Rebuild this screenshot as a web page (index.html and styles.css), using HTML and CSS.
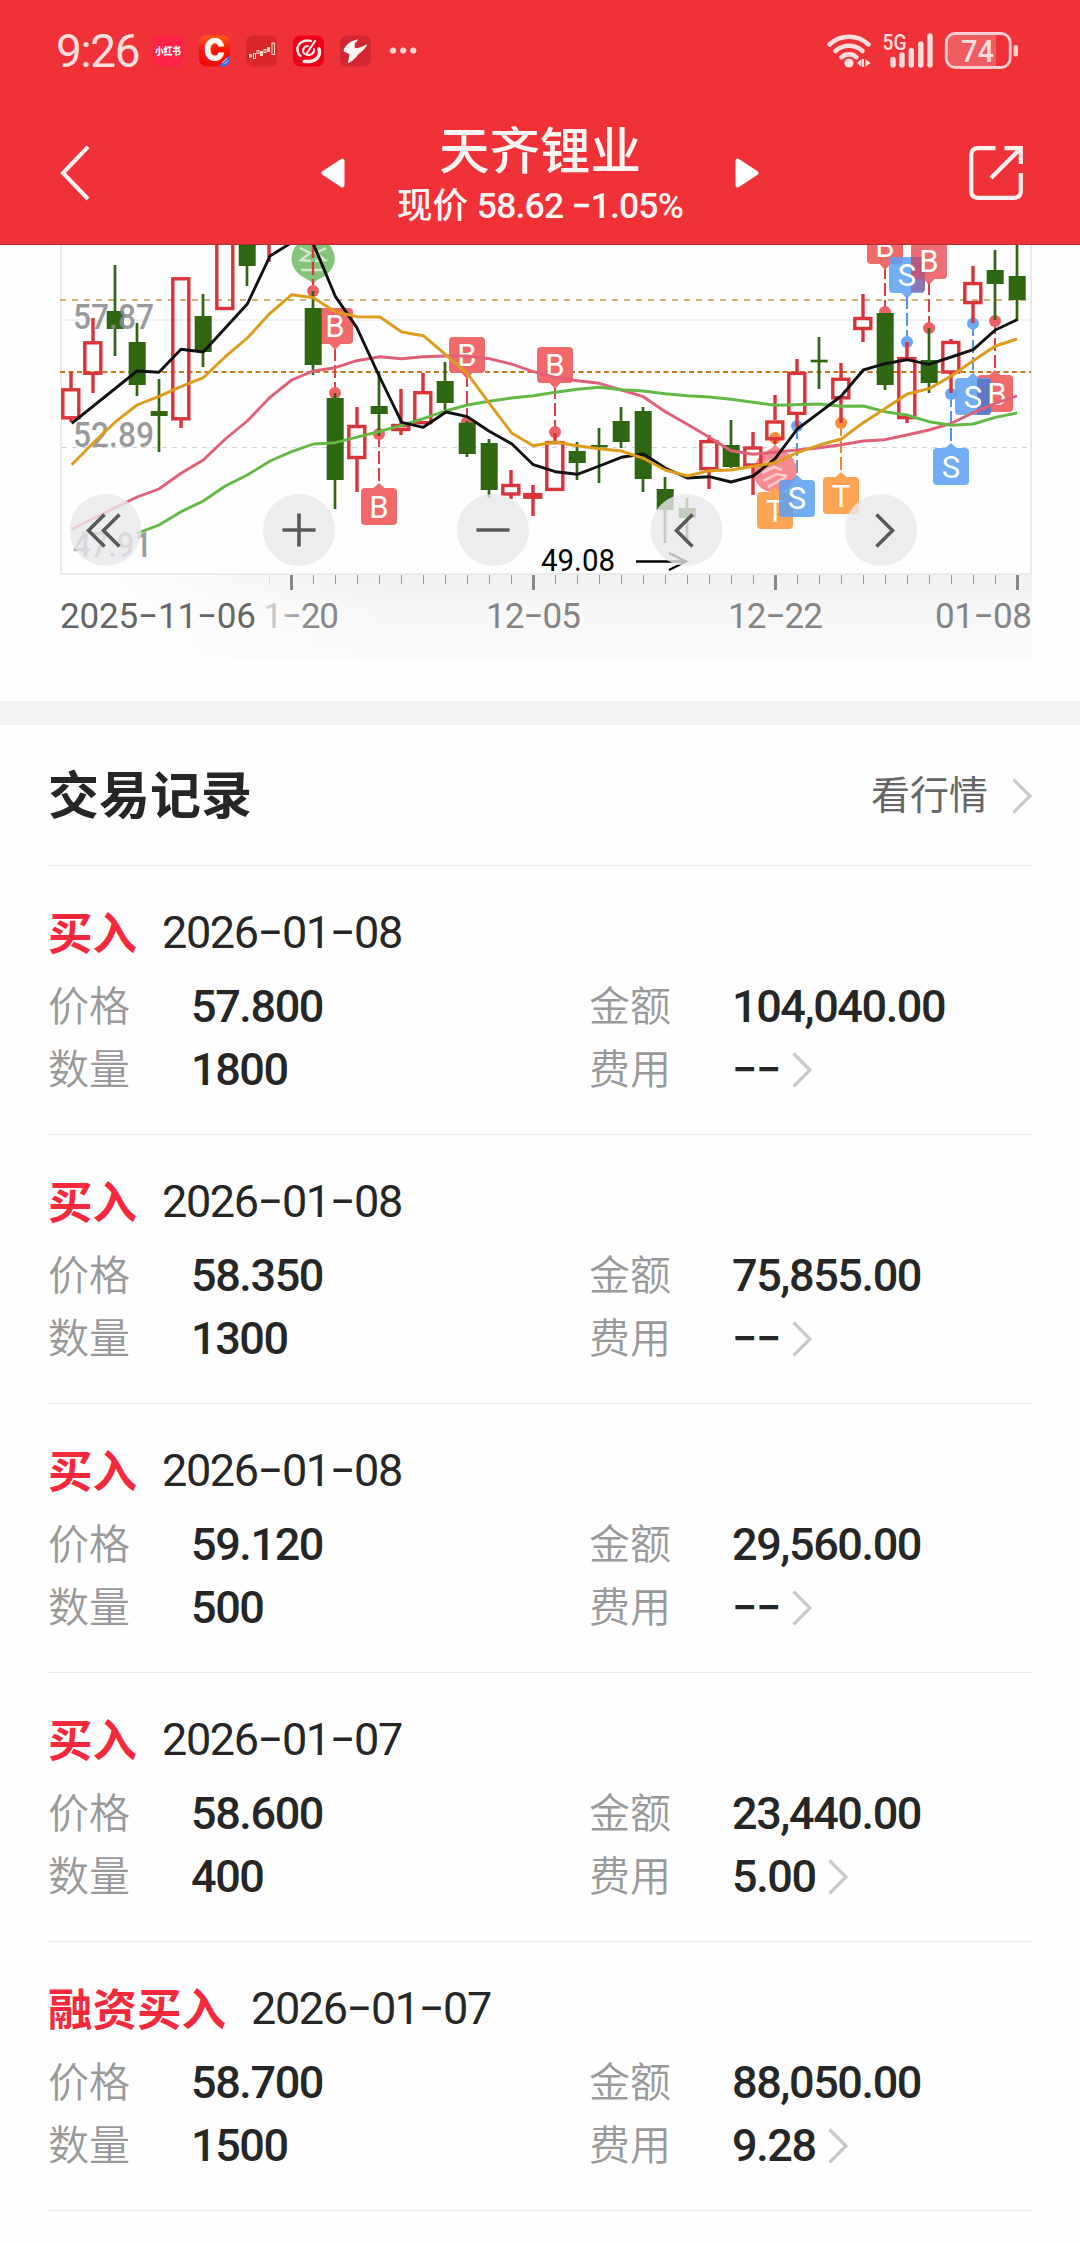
FILE: index.html
```html
<!DOCTYPE html>
<html lang="zh-CN">
<head>
<meta charset="utf-8">
<title>天齐锂业 交易记录</title>
<link rel="stylesheet" href="styles.css">
</head>
<body>
<svg class="defs" width="0" height="0" aria-hidden="true">
  <symbol id="chevron" viewBox="0 0 20 36"><path d="M1.5 1.5 18 18 1.5 34.500" fill="none" stroke="#c9c9c9" stroke-width="3.200"/></symbol>
</svg>
<header class="header">
  <div class="status">
    <span class="clock">9:26</span>
    <svg class="apps" viewBox="153 35 264 32" width="264" height="32">
      <defs><linearGradient id="cg" x1="0" y1="0" x2="0" y2="1"><stop offset="0" stop-color="#ff5a1c"/><stop offset=".5" stop-color="#f31206"/><stop offset="1" stop-color="#ee0a08"/></linearGradient></defs>
      <rect x="153" y="35.500" width="31" height="31" rx="7" fill="#fb2348"/>
      <text class="xhs" x="155" y="55" textLength="26" lengthAdjust="spacingAndGlyphs">小红书</text>
      <rect x="199" y="35.500" width="31" height="31" rx="7" fill="url(#cg)"/>
      <text class="cmark" x="204" y="61" textLength="21" lengthAdjust="spacingAndGlyphs">C</text>
      <path d="M230 55v4.500a7 7 0 0 1-7 7h-4.500z" fill="#3b6fdc"/>
      <path d="M222 63l5-5M224.500 64l3.500-3.500" stroke="#c8d8fa" stroke-width="1"/>
      <rect x="246" y="35.500" width="31" height="31" rx="7" fill="#d9262b"/>
      <g fill="#ffd9c8"><rect x="249" y="54" width="3" height="3.500"/><rect x="260" y="51" width="3" height="5"/><rect x="267" y="47" width="3" height="5"/></g>
      <g fill="none" stroke="#ffd9c8"><rect x="253.500" y="53.500" width="2" height="5"/><rect x="257" y="50.500" width="2" height="3"/><rect x="264" y="49.500" width="2" height="3"/><rect x="272" y="43" width="2.500" height="11.500"/></g>
      <rect x="293" y="35.500" width="31" height="31" rx="7" fill="#ee0019"/>
      <g fill="none" stroke="#ffe9e6" stroke-linecap="round">
        <path d="M311 41c-8-2-14 3-13.500 9 .3 3 1.500 5 3 6" stroke-width="2.500"/>
        <path d="M319 49c2 7-3 12-9 12.500h-6" stroke-width="3.500"/>
        <path d="M315 41 307 53" stroke-width="2.200"/>
        <path d="M308 46c-5 0-6.500 6-3 8 5 3 10-1 9-5" stroke-width="2"/>
      </g>
      <rect x="340" y="35.500" width="31" height="31" rx="7" fill="#d22733"/>
      <path d="M357.500 40c-6 1-12.500 5-13.500 11l6 3-1.500 8.500c2-.5 7-4.500 9.500-8.500 3-2 7-5.500 8.500-9-4 2-8 4-11.500 3.500-1.500-3-1-5.500 2.500-8.500z" fill="#fff5f3" stroke="#fff5f3" stroke-width="1"/>
      <g fill="#ffd6d4"><circle cx="393" cy="50.500" r="3.100"/><circle cx="403.200" cy="50.500" r="3.100"/><circle cx="413.300" cy="50.500" r="3.100"/></g>
    </svg>
    <svg class="system" viewBox="826 31 194 40" width="194" height="40">
      <g fill="none" stroke="#ffdedd" stroke-width="4.600" stroke-linecap="round">
        <path d="M829.500 44.500a28.500 28.500 0 0 1 39 0"/>
        <path d="M835.500 51a20 20 0 0 1 27 0"/>
        <path d="M841.500 57.200a11.500 11.500 0 0 1 15 0"/>
      </g>
      <circle cx="849" cy="63" r="4.600" fill="#ffdedd"/>
      <path d="M857 63l4.500-4v8zM870.500 63l-5-4v8zM862 59h2v8h-2z" fill="#ffdedd"/>
      <text class="net" x="882.500" y="50" textLength="24" lengthAdjust="spacingAndGlyphs">5G</text>
      <path d="M893 59.500v5.500M902 55v10M911.300 50.500v14.500M920.800 44v21M930 36v29" stroke="#ffdedd" stroke-width="5.400" stroke-linecap="round"/>
      <path d="M956 35h40v31h-40q-9 0-9-9v-13q0-9 9-9z" fill="#f05c60"/>
      <rect x="946.200" y="33.500" width="64" height="34" rx="9" fill="none" stroke="#ffcfcf" stroke-width="2.800"/>
      <rect x="1013.500" y="45" width="4.500" height="11.500" rx="2" fill="#ffcfcf"/>
      <text class="batt" x="961" y="62" textLength="33" lengthAdjust="spacingAndGlyphs">74</text>
    </svg>
  </div>
  <nav class="nav">
    <svg class="back" viewBox="0 0 30 56" width="30" height="56"><path d="M28 1.800 3 28 28 54" fill="none" stroke="#fff5f3" stroke-width="4"/></svg>
    <svg class="tri" viewBox="0 0 24 30" width="24" height="30"><path d="M21.500 2.500v25L2.500 15z" fill="#fff" stroke="#fff" stroke-width="4" stroke-linejoin="round"/></svg>
    <div class="titles">
      <h1>天齐锂业</h1>
      <p>现价 <span>58.62 −1.05%</span></p>
    </div>
    <svg class="tri" viewBox="0 0 24 30" width="24" height="30"><path d="M2.500 2.500v25L21.500 15z" fill="#fff" stroke="#fff" stroke-width="4" stroke-linejoin="round"/></svg>
    <svg class="share" viewBox="0 0 54 54" width="54" height="54"><g fill="none" stroke="#fff1ef" stroke-width="4.200"><path d="M26.500 2.200H9Q2.200 2.200 2.200 9v36q0 6.800 6.800 6.800h36q6.800 0 6.800-6.800V27"/><path d="M35.500 2.200H51.800V18"/><path d="M22 32 51 3"/></g></svg>
  </nav>
</header>

<section class="chart">
<svg viewBox="0 245 1080 456" width="1080" height="456">
  <defs>
    <linearGradient id="axisx" x1="0" x2="1" y1="0" y2="0"><stop offset="0" stop-color="#fff"/><stop offset=".35" stop-color="#fff" stop-opacity="0"/></linearGradient>
    <linearGradient id="axisy" x1="0" x2="0" y1="0" y2="1"><stop offset="0" stop-color="#f1f1f1"/><stop offset=".4" stop-color="#f7f7f7"/><stop offset="1" stop-color="#fafafa"/></linearGradient>
    <linearGradient id="fade" gradientUnits="userSpaceOnUse" x1="262" x2="310" y1="0" y2="0"><stop offset="0" stop-color="#ddd"/><stop offset="1" stop-color="#888"/></linearGradient>
    <g id="up"><path d="M-5.500-19 0-24 5.500-19z"/><rect x="-18" y="-19" width="36" height="37" rx="4"/></g>
    <g id="down"><path d="M-5.500 18 0 24 5.500 18z"/><rect x="-18" y="-18" width="36" height="36" rx="4"/></g>
  </defs>
  <rect x="61" y="574" width="971" height="85" fill="url(#axisy)"/>
  <rect x="60" y="574" width="972" height="85" fill="url(#axisx)"/>
  <path d="M61.200 245V574H1031.200V245" fill="none" stroke="#e6e6e6" stroke-width="1.600"/>
  <path d="M62 320H1031" stroke="#eee" stroke-width="1.400"/>
  <path d="M62 447.500H1031" stroke="#d2d2d2" stroke-width="1.200" stroke-dasharray="5 5"/>
  <path d="M60 300H1031" stroke="#bf9a55" stroke-width="1.700" stroke-dasharray="6 6"/>
  <path d="M60 372H1031" stroke="#c9771f" stroke-width="2" stroke-dasharray="5 3.500"/>

  <g fill="none" stroke-width="2" stroke-dasharray="13 4">
    <path stroke="#dc4048" d="M335 348v45M379 434v52M467 374v47M555 386v46M885 266v45M929 282v46M995 321v52"/>
    <path stroke="#4d97ec" d="M907 296v46M797 426v52M951 394v52M973 323v52"/>
    <path stroke="#f0852c" d="M841 423v52M775 440v52"/>
  </g>
  <g fill="#ee6063">
    <circle cx="335" cy="393" r="6"/><circle cx="379" cy="434" r="6"/><circle cx="467" cy="422" r="6"/><circle cx="555" cy="432" r="6"/><circle cx="885" cy="312" r="6"/><circle cx="929" cy="328" r="6"/><circle cx="995" cy="321" r="6"/><circle cx="313" cy="291" r="6"/>
  </g>
  <g fill="#6aa8f4"><circle cx="907" cy="342" r="6"/><circle cx="797" cy="426" r="6"/><circle cx="951" cy="394" r="6"/><circle cx="973" cy="323.500" r="6"/></g>
  <g fill="#ff8c3c"><circle cx="841" cy="423" r="6"/><circle cx="775" cy="438" r="6"/></g>
  <path d="M775 444c4 6 10 6 16 12 9 10 6 24-1 31-8 7-22 7-30 0-7-7-9-21 0-31 5-6 12-6 15-12z" fill="#f68a90"/>
  <path d="M764 464l9-4M762 473l12-6 8 3M763 481l14-7 10 2M768 487l18-10" fill="none" stroke="#fcc9cc" stroke-width="2.600"/>
  <path d="M313 284c-3-5-12-6-17-13-9-12-3-23 4-30h26c8 8 13 19 4 30-5 7-14 8-17 13z" fill="#85c57b"/>
  <path d="M300 248l10 5-9 7 10 1M326 248l-10 5 9 7-10 1M301 270h24" fill="none" stroke="#d4ead0" stroke-width="2.500"/>
  <path d="M313 245v40" stroke="#d83a3f" stroke-width="2.400" stroke-dasharray="13 4"/>

  <g fill="#f06a6c">
    <use href="#down" x="335" y="326"/><use href="#up" x="379" y="507"/><use href="#down" x="467" y="355"/><use href="#down" x="555" y="365"/><use href="#down" x="885" y="246"/><use href="#up" x="995" y="394"/>
  </g>
  <use href="#up" x="775" y="511" fill="#ffa354"/>
  <use href="#up" x="841" y="496" fill="#ffa354"/>
  <g fill="#5b9ff2" fill-opacity=".85">
    <use href="#down" x="907" y="275"/><use href="#up" x="951" y="467"/><use href="#up" x="973" y="397"/>
  </g>
  <use href="#down" x="929" y="261" fill="#ec5a62" fill-opacity=".88"/>
  <path d="M911 257h14v31a4 4 0 0 1-3 4h-11z" fill="#9c5184" fill-opacity=".6"/>
  <path d="M977 379h14v33q0 3-3 3h-11z" fill="#5465b8" fill-opacity=".6"/>
  <g class="flag">
    <text x="335" y="337">B</text><text x="379" y="518">B</text><text x="467" y="366">B</text><text x="555" y="376">B</text><text x="885" y="257">B</text><text x="929" y="272">B</text><text x="997" y="405">B</text>
    <text x="907" y="286">S</text><text x="951" y="478">S</text><text x="973" y="408">S</text>
    <text x="775" y="522">T</text><text x="841" y="507">T</text>
  </g>
  <use href="#up" x="797" y="499" fill="#5b9ff2" fill-opacity=".85"/>
  <g class="flag"><text x="797" y="509">S</text></g>

  <!-- daily candles, 22px apart -->
  <g stroke="#2e6612" stroke-width="2.700">
    <path d="M115 265V356M137 323V396M159 379V452M203 294V367M247 245V286M313 291V375M335 393V509M379 371V436M445 362V410M467 421V457M489 439V498M577 442V480M599 428V483M621 407V448M643 407V492M665 477V543M687 498V543M731 420V468M819 337V389M885 313V390M929 328V393M995 250V320M1017 245V321"/>
  </g>
  <g fill="#2e6612">
    <rect x="106.700" y="311" width="17" height="18"/><rect x="128.700" y="342" width="17" height="43"/><rect x="150.700" y="411" width="17" height="5"/><rect x="194.700" y="316" width="17" height="36"/><rect x="238.700" y="245" width="17" height="21"/><rect x="304.700" y="308" width="17" height="57"/><rect x="326.700" y="398" width="17" height="82"/><rect x="370.700" y="406" width="17" height="8"/><rect x="436.700" y="381" width="17" height="22"/><rect x="458.700" y="422.700" width="17" height="31.300"/><rect x="480.700" y="443" width="17" height="47"/><rect x="568.700" y="451" width="17" height="12"/><rect x="590.700" y="445" width="17" height="2.400"/><rect x="612.700" y="421" width="17" height="21"/><rect x="634.700" y="411" width="17" height="68"/><rect x="656.700" y="489" width="17" height="21"/><rect x="678.700" y="508" width="17" height="10"/><rect x="722.700" y="445" width="17" height="22"/><rect x="810.700" y="359.700" width="17" height="2.700"/><rect x="876.700" y="313" width="17" height="72"/><rect x="920.700" y="360" width="17" height="23"/><rect x="986.700" y="270" width="17" height="14"/><rect x="1008.700" y="276" width="17" height="24"/>
  </g>
  <g stroke="#d83439" stroke-width="3.400" fill="none">
    <path d="M71 372V388M71 419v3M93 318V341M93 375V393M181 420V428M269 245V262M357 407V425M357 459V492M401 389V424M401 431v4M423 373V391M511 470V484M511 495v4M533 485V516M555 433V441M709 435V440M709 470V489M753 432V447M753 466V495M775 395V420M775 440v4M797 359V372M797 415V427M841 363V378M841 399V423M863 294V317M863 330V342M907 342V357M907 419V423M951 339v3M951 373V393M973 266V282M973 304V323"/>
    <rect x="62.800" y="389.800" width="16" height="28"/><rect x="84.800" y="342.800" width="16" height="30.500"/><rect x="172.800" y="278.800" width="16" height="140"/><rect x="216.800" y="235" width="16" height="73.500"/><rect x="348.800" y="426.500" width="16" height="31"/><rect x="392.800" y="425.500" width="16" height="4"/><rect x="414.800" y="392.700" width="16" height="30"/><rect x="502.800" y="485.500" width="16" height="8.500"/><rect x="524.800" y="494.600" width="16" height="2.600"/><rect x="546.800" y="442.600" width="16" height="46.800"/><rect x="700.800" y="441.600" width="16" height="27"/><rect x="744.800" y="448" width="16" height="17"/><rect x="766.800" y="422" width="16" height="16.800"/><rect x="788.800" y="373.400" width="16" height="40"/><rect x="832.800" y="379.300" width="16" height="18.500"/><rect x="854.800" y="318.500" width="16" height="10"/><rect x="898.800" y="358.600" width="16" height="59"/><rect x="942.800" y="342.500" width="16" height="29.500"/><rect x="964.800" y="283.600" width="16" height="19"/>
  </g>

  <text class="price" x="73" y="328.500" textLength="81" lengthAdjust="spacingAndGlyphs">57.87</text>
  <text class="price" x="73" y="447" textLength="81" lengthAdjust="spacingAndGlyphs">52.89</text>
  <text class="price" x="73" y="557" textLength="79" lengthAdjust="spacingAndGlyphs">47.91</text>

  <!-- moving averages -->
  <g fill="none" stroke-width="2.900" stroke-linejoin="round">
    <polyline stroke="#e25f78" points="71.700,529.300 137,497 159,489 181,473.300 203.300,460 225.300,439 247.300,421 270,397.300 291.700,380 313.300,371 335.300,367.700 356.700,360.700 380,356.700 401.700,358.700 423.300,356.700 445.300,356 467.300,356 489.300,358.700 511.300,364 533.300,371.700 555.300,377.300 577.300,380.700 599.300,383.300 621.300,390 643.300,396.700 665.300,411.700 687.300,424.300 709.300,437.300 731,450.700 753.300,454.300 775.300,452.300 819.300,447.700 841.300,444.700 863.300,441 885,439.700 906.700,435 929,430 951.300,423.300 973.300,412.700 995.300,403.300 1017,396"/>
    <polyline stroke="#64b946" points="137,533.300 159,525 181,511.700 203.300,501 225.300,486 247.300,475 270,461 291.700,451.700 313.300,444 335.300,442.700 378.700,431.700 401.700,425.300 423.300,418.700 445.300,411 467.300,405 489.300,401.300 511.300,398 533.300,395.700 555.300,392.300 577.300,389.300 599.300,387.300 621.300,389.700 643.300,391 665.300,393.700 687.300,395.700 709.300,397 731,399.300 775.300,405.300 819.300,404 841.300,406.300 863.300,406 885,411.700 906.700,415 929,421.700 951.300,425.300 973.300,424 995.300,417.300 1017,413"/>
    <polyline stroke="#111" points="71.700,423.300 137,371 159,372.300 181,349.300 203.300,352 247.300,304 270,256 291,243 313,243 335.500,296.700 356.700,327.300 378.700,375 401.700,422.300 423.300,427.300 446,412 467.300,416.700 489.300,431.300 512,444 533.300,464.700 555.300,471.700 577.300,474.300 599.300,466 621.300,457.300 643.300,454 665.300,468 687.300,478 709.300,476.700 731,482 753.300,476 775.300,458.300 797.300,429 819.300,412.700 841.300,396 863.300,370 885,363.700 906.700,359.700 929,364.300 951.300,357 973.300,349.700 995.300,330 1017,319.700"/>
    <polyline stroke="#dd9c1c" points="71.700,464.700 93.300,442.700 115.700,421.700 137,405 159,396.300 181,386.700 203.300,377.700 225.300,356.700 247.300,338 270,313.300 291.700,294.700 313.300,297.700 335.300,311.700 356.700,316.700 380,317 401.700,332 423.300,335.700 445.300,354.300 467.300,373.300 489.300,403.300 512,433.300 533.300,445.700 555.300,442 577.300,445.700 599.300,448.700 621.300,451 643.300,458.300 665.300,470 687.300,476 709.300,470.700 731,470 775.300,462.700 797.300,452.700 819.300,445 841.300,439 863.300,422.700 907.300,394 929,388.700 951.300,376 973.300,360.700 995.300,346 1017,339"/>
  </g>

  <path d="M636 561.500H686M669 553 686 561.500 669 570" fill="none" stroke="#000" stroke-width="2.400"/>
  <text class="low" x="541" y="570.500" textLength="74" lengthAdjust="spacingAndGlyphs">49.08</text>

  <g fill="#e9e9ec" fill-opacity=".8">
    <circle cx="105.500" cy="530" r="36"/><circle cx="299" cy="530" r="36"/><circle cx="493" cy="530" r="36"/><circle cx="686.500" cy="530" r="36"/><circle cx="881" cy="530" r="36"/>
  </g>
  <path d="M104.500 514.500 88.500 530.500 104.500 546.500M119.500 514.500 103.500 530.500 119.500 546.500M282.500 530H315.500M299 513.500V546.500M476.500 530H509.500M692.500 514.500 676.500 530.500 692.500 546.500M876.500 514.500 892.500 530.500 876.500 546.500" fill="none" stroke="#595959" stroke-width="3.600"/>

  <path d="M313.500 575v9M335.500 575v9M357.500 575v9M379.500 575v9M401.500 575v9M423.500 575v9M445.500 575v9M467.500 575v9M489.500 575v9M511.500 575v9M555.500 575v9M577.500 575v9M599.500 575v9M621.500 575v9M643.500 575v9M665.500 575v9M687.500 575v9M709.500 575v9M731.500 575v9M753.500 575v9M797.500 575v9M819.500 575v9M841.500 575v9M863.500 575v9M885.500 575v9M907.500 575v9M929.500 575v9M951.500 575v9M973.500 575v9M995.500 575v9" stroke="#999" stroke-width="1"/>
  <path d="M269.500 575v9" stroke="#ddd"/>
  <path d="M291.500 575v15M533.500 575v15M775.500 575v15M1017.500 575v15" stroke="#888" stroke-width="3"/>
  <g class="dates">
    <text x="60" y="628" textLength="196" fill="#666">2025−11−06</text>
    <text x="263" y="628" textLength="76" fill="url(#fade)">1−20</text>
    <text x="486" y="628" textLength="95" fill="#858585">12−05</text>
    <text x="728" y="628" textLength="95" fill="#858585">12−22</text>
    <text x="935" y="628" textLength="97" fill="#858585">01−08</text>
  </g>
</svg>
</section>

<main class="records">
  <div class="records-head">
    <h2>交易记录</h2>
    <a class="more">看行情<svg class="chev" width="20" height="36"><use href="#chevron"/></svg></a>
  </div>
  <article class="trade">
    <h3><b>买入</b><time>2026−01−08</time></h3>
    <dl>
      <dt>价格</dt><dd>57.800</dd><dt>金额</dt><dd>104,040.00</dd>
      <dt>数量</dt><dd>1800</dd><dt>费用</dt><dd>−−<svg class="chev" width="20" height="36"><use href="#chevron"/></svg></dd>
    </dl>
  </article>
  <article class="trade">
    <h3><b>买入</b><time>2026−01−08</time></h3>
    <dl>
      <dt>价格</dt><dd>58.350</dd><dt>金额</dt><dd>75,855.00</dd>
      <dt>数量</dt><dd>1300</dd><dt>费用</dt><dd>−−<svg class="chev" width="20" height="36"><use href="#chevron"/></svg></dd>
    </dl>
  </article>
  <article class="trade">
    <h3><b>买入</b><time>2026−01−08</time></h3>
    <dl>
      <dt>价格</dt><dd>59.120</dd><dt>金额</dt><dd>29,560.00</dd>
      <dt>数量</dt><dd>500</dd><dt>费用</dt><dd>−−<svg class="chev" width="20" height="36"><use href="#chevron"/></svg></dd>
    </dl>
  </article>
  <article class="trade">
    <h3><b>买入</b><time>2026−01−07</time></h3>
    <dl>
      <dt>价格</dt><dd>58.600</dd><dt>金额</dt><dd>23,440.00</dd>
      <dt>数量</dt><dd>400</dd><dt>费用</dt><dd>5.00<svg class="chev" width="20" height="36"><use href="#chevron"/></svg></dd>
    </dl>
  </article>
  <article class="trade">
    <h3><b>融资买入</b><time>2026−01−07</time></h3>
    <dl>
      <dt>价格</dt><dd>58.700</dd><dt>金额</dt><dd>88,050.00</dd>
      <dt>数量</dt><dd>1500</dd><dt>费用</dt><dd>9.28<svg class="chev" width="20" height="36"><use href="#chevron"/></svg></dd>
    </dl>
  </article>
</main>
</body>
</html>
```
FILE: styles.css
```css
* { box-sizing: border-box; margin: 0; padding: 0; }
body {
  width: 1080px;
  height: 2244px;
  overflow: hidden;
  background: #fefefe;
  color: #262626;
  font-family: Roboto, "Noto Sans CJK SC", sans-serif;
}
svg { display: block; flex: none; }
.defs { position: absolute; }

.header { height: 245px; background: #f03138; border-bottom: 1px solid #a8343a; color: #fff5f3; }
.status { height: 102px; display: flex; align-items: center; padding: 0 60px 0 56px; }
.clock { width: 97px; font-size: 46px; font-weight: 450; line-height: 60px; letter-spacing: -1.400px; color: #ffdedd; }
.apps { margin-right: auto; overflow: visible; }
.xhs { font: 900 10px "Noto Sans CJK SC", sans-serif; fill: #fff; }
.cmark { font: 900 31px Inter, sans-serif; fill: #fff5f3; }
.net { font: 500 22px Roboto, sans-serif; fill: #ffdedd; }
.batt { font: 500 32px Roboto, sans-serif; fill: #ffdedd; }

.nav { height: 142px; display: flex; align-items: center; padding: 0 57px 0 60px; }
.back { margin-right: 231px; }
.titles { width: 390px; padding-top: 7px; text-align: center; }
.titles h1 { font-size: 50.500px; font-weight: 500; line-height: 58px; }
.titles p { font-size: 35.500px; font-weight: 500; line-height: 50px; white-space: pre; }
.titles span { letter-spacing: -.8px; }
.share { margin-left: auto; }

.chart { height: 480px; border-bottom: 24px solid #f4f4f4; }
.flag { font: 400 31px Roboto, sans-serif; fill: #fff; text-anchor: middle; }
.price { font: 500 35px Roboto, sans-serif; fill: #8c8c90; fill-opacity: .88; }
.low { font: 400 31px Roboto, sans-serif; fill: #000; }
.dates { font: 450 35px Roboto, sans-serif; }

.records { padding: 0 48px; }
.records-head {
  height: 141px;
  display: flex;
  align-items: center;
  justify-content: space-between;
  border-bottom: 1px solid #ebebeb;
}
.records-head h2 { padding-top: 3px; font-size: 51px; font-weight: 700; line-height: 60px; }
.more { display: flex; align-items: center; gap: 24px; padding-top: 1px; font-size: 39px; line-height: 50px; color: #666; }

.trade { height: 269px; padding-top: 41px; border-bottom: 1px solid #ebebeb; }
.trade h3 { display: flex; align-items: center; gap: 25px; height: 56px; font-size: 44.500px; font-weight: 400; }
.trade b { font-weight: 700; color: #f5283c; line-height: 56px; }
.trade time { padding-bottom: 6px; font-size: 45px; font-weight: 450; letter-spacing: -1.400px; }
.trade dl {
  display: grid;
  grid-template-columns: 143px 398px 143px 1fr;
  grid-template-rows: 63px 63px;
  align-items: center;
  margin-top: 12px;
}
.trade dt { padding-top: 1px; font-size: 41px; line-height: 56px; color: #999; font-weight: 350; }
.trade dd {
  display: flex;
  align-items: center;
  gap: 12px;
  font-size: 45px;
  font-weight: 500;
  letter-spacing: -1.400px;
}
```
